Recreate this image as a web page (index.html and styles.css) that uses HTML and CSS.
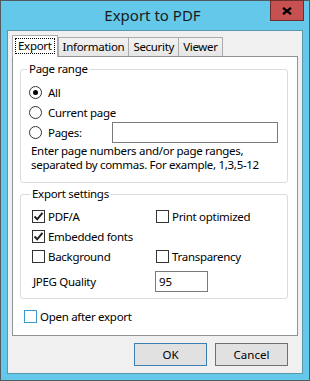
FILE: index.html
```html
<!DOCTYPE html>
<html lang="en">
<head>
  <meta charset="UTF-8" />
  <title>Export to PDF</title>
  <link rel="stylesheet" href="styles.css">
</head>
<body>
  <div class="window">
    <div class="titlebar">
      <span class="title">Export to PDF</span>
      <button class="close" aria-label="Close">
        <svg width="10" height="8" viewBox="0 0 10 8"><path d="M1 0.8 L9 7.2 M9 0.8 L1 7.2" stroke="#000" stroke-width="2.2" fill="none"/></svg>
      </button>
    </div>

    <div class="client">
      <div class="tabs">
        <div class="tab active"><span class="focus">Export</span></div>
        <div class="tab">Information</div>
        <div class="tab">Security</div>
        <div class="tab">Viewer</div>
      </div>

      <div class="pane">
        <fieldset class="group range">
          <legend>Page range</legend>
          <label class="row"><span class="radio checked"></span>All</label>
          <label class="row"><span class="radio"></span>Current page</label>
          <div class="row">
            <label class="option pages-label"><span class="radio"></span>Pages:</label>
            <input class="field pages" type="text">
          </div>
          <p class="hint">Enter page numbers and/or page ranges,<br>separated by commas. For example, 1,3,5-12</p>
        </fieldset>

        <fieldset class="group settings">
          <legend>Export settings</legend>
          <div class="grid">
            <label class="row"><span class="check checked"><svg width="11" height="11" viewBox="0 0 11 11"><path d="M1.5 5.5 L4.2 8.3 L9.5 1.8" stroke="#222" stroke-width="2" fill="none"/></svg></span>PDF/A</label>
            <label class="row"><span class="check"></span>Print optimized</label>
            <label class="row"><span class="check checked"><svg width="11" height="11" viewBox="0 0 11 11"><path d="M1.5 5.5 L4.2 8.3 L9.5 1.8" stroke="#222" stroke-width="2" fill="none"/></svg></span>Embedded fonts</label>
            <span></span>
            <label class="row"><span class="check"></span>Background</label>
            <label class="row"><span class="check"></span>Transparency</label>
          </div>
          <div class="row quality">
            <span class="quality-label">JPEG Quality</span>
            <input class="field jpeg" type="text" value="95">
          </div>
        </fieldset>

        <label class="row open"><span class="check hot"></span>Open after export</label>
      </div>

      <div class="buttons">
        <button class="btn default">OK</button>
        <button class="btn">Cancel</button>
      </div>
    </div>
  </div>
</body>
</html>
```

FILE: styles.css
```css
* {
  box-sizing: border-box;
}

body {
  margin: 0;
  font-family: "Noto Sans", "Open Sans", sans-serif;
  font-size: 11.5px;
  letter-spacing: -0.3px;
  color: #000;
}

.window {
  width: 310px;
  height: 381px;
  background: #63c8e9;
  border: 1px solid #4f5b61;
}

/* title bar */
.titlebar {
  display: grid;
  grid-template-columns: 1fr auto 1fr;
  align-items: start;
  height: 29px;
  padding-right: 5px;
}

.title {
  grid-column: 2;
  font-size: 15px;
  letter-spacing: 0;
  line-height: 28px;
  color: #1a1a1a;
}

.close {
  grid-column: 3;
  justify-self: end;
  width: 34px;
  height: 21px;
  margin-top: -1px;
  padding: 0;
  border: 1px solid #6a3030;
  background: #c75050;
  display: flex;
  align-items: center;
  justify-content: center;
}

/* client area */
.client {
  margin: 0 6px;
  height: 344px;
  background: #f0f0f0;
  border: 1px solid #5a98ad;
  padding: 4px 4px 0 4px;
}

.tabs {
  display: flex;
  align-items: flex-end;
  height: 21px;
}

.tab {
  height: 19px;
  padding: 0 4px;
  line-height: 17px;
  border: 1px solid #acacac;
  border-bottom: none;
  background: linear-gradient(#f2f2f2, #e6e6e6);
}

.tab + .tab {
  margin-left: -1px;
}

.tab.active {
  height: 22px;
  margin-bottom: -1px;
  padding: 2px 2px 0 2px;
  background: #fff;
  position: relative;
  z-index: 1;
}

.tab.active + .tab {
  margin-left: 0;
}

.focus {
  display: block;
  height: 16px;
  padding: 0 3px;
  line-height: 15px;
  outline: 1px dotted #000;
  outline-offset: -1px;
}

.pane {
  height: 280px;
  background: #fff;
  border: 1px solid #8f9296;
  padding: 4px 9px 0 7px;
}

/* group boxes */
.group {
  margin: 0;
  border: 1px solid #dcdcdc;
  border-radius: 3px;
  padding: 5px 8px 10px 8px;
}

.group legend {
  padding: 0 2px;
  margin-left: -2px;
  line-height: 16px;
}

.settings {
  margin-top: 3px;
  padding: 4px 8px 6px 11px;
}

.row {
  display: flex;
  align-items: center;
  height: 20px;
}

.option {
  display: flex;
  align-items: center;
}

.radio {
  width: 13px;
  height: 13px;
  margin-right: 6px;
  border: 1px solid #333;
  border-radius: 50%;
  background: #fff;
  display: flex;
  align-items: center;
  justify-content: center;
}

.radio.checked::after {
  content: "";
  width: 5px;
  height: 5px;
  border-radius: 50%;
  background: #000;
}

.pages-label {
  width: 83px;
}

.field {
  height: 21px;
  border: 1px solid #7a7a7a;
  background: #fff;
  font: inherit;
  padding: 0 3px;
}

.pages {
  width: 166px;
}

.hint {
  margin: 2px 0 0 2px;
  line-height: 14px;
  white-space: nowrap;
}

.grid {
  display: grid;
  grid-template-columns: 124px auto;
}

.check {
  width: 13px;
  height: 13px;
  margin-right: 3px;
  border: 1px solid #333;
  background: #fff;
  display: flex;
  align-items: center;
  justify-content: center;
}

.check.hot {
  border-color: #3c98d5;
}

.quality {
  height: 21px;
  margin-top: 5px;
}

.quality-label {
  width: 123px;
  padding-left: 1px;
}

.jpeg {
  width: 53px;
}

.open {
  margin: 7px 0 0 4px;
}

/* dialog buttons */
.buttons {
  display: flex;
  justify-content: flex-end;
  gap: 8px;
  margin-top: 7px;
  padding-right: 10px;
}

.btn {
  width: 73px;
  height: 23px;
  font: inherit;
  letter-spacing: 0;
  color: #000;
  background: #e1e1e1;
  border: 1px solid #707070;
}

.btn.default {
  border-color: #3c7fb1;
}
```
